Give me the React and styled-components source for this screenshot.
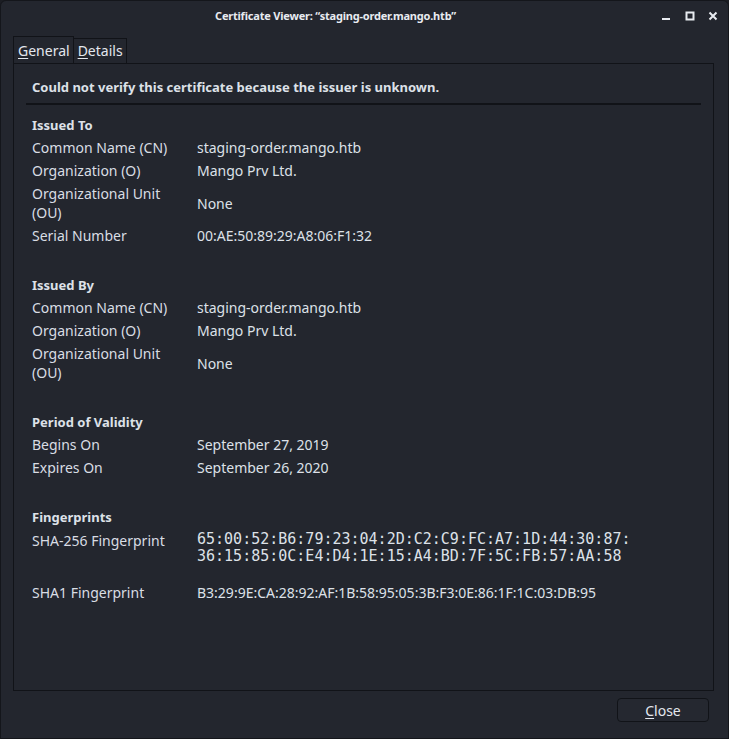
import React from 'react'
import styled, { createGlobalStyle } from 'styled-components'

const Global = createGlobalStyle`
    html, body {
        margin: 0;
        padding: 0;
        background: #1b1d23;
    }
    * { box-sizing: border-box; }
`

const Window = styled.div`
    width: 729px;
    height: 739px;
    background: #23262e;
    border: 1px solid #14161b;
    border-radius: 6px 6px 0 0;
    display: flex;
    flex-direction: column;
    font-family: "Noto Sans", "Open Sans", sans-serif;
    color: #dde1e8;
    overflow: hidden;
`

const TitleBar = styled.div`
    height: 29px;
    display: flex;
    align-items: center;
    padding: 0 10px 0 8px;
`

const Title = styled.div`
    flex: 1;
    text-align: center;
    font-weight: 700;
    font-size: 11px;
    letter-spacing: -0.2px;
    color: #e8ebf0;
`

const Controls = styled.div`
    display: flex;
    align-items: center;
    gap: 13px;
    svg { display: block; }
`

const Body = styled.div`
    flex: 1;
    display: flex;
    flex-direction: column;
    padding: 6px 14px 0 12px;
`

const Tabs = styled.div`
    display: flex;
    align-items: flex-end;
    height: 27px;
`

const Tab = styled.div`
    height: ${p => (p.active ? '27px' : '25px')};
    padding: ${p => (p.active ? '1px' : '0')} 3px 0 4px;
    border: 1px solid #111318;
    border-bottom: none;
    ${p => (p.active ? '' : 'border-left: none;')}
    font-size: 14px;
    line-height: ${p => (p.active ? '26px' : '24px')};
    color: #e3e7ee;
    u { text-decoration-thickness: 1px; text-underline-offset: 2px; }
`

const Panel = styled.div`
    height: 628px;
    border: 1px solid #111318;
    padding: 11px 12px 0 12px;
`

const Warning = styled.div`
    font-weight: 700;
    font-size: 13px;
    line-height: 25px;
    padding-left: 6px;
`

const Separator = styled.div`
    height: 2px;
    background: #111318;
    margin: 3px 0 9px 0;
`

const Section = styled.div`
    padding-left: 6px;
    margin-bottom: ${p => (p.last ? '0' : '27px')};
`

const Heading = styled.div`
    font-weight: 700;
    font-size: 13px;
    line-height: 22px;
`

const Row = styled.div`
    display: grid;
    grid-template-columns: 165px 1fr;
    align-items: center;
    min-height: 23px;
    padding: 2px 0;
    margin-top: ${p => p.gap || 0}px;
    font-size: 14px;
    line-height: 19px;
`

const Label = styled.div`
    color: #d9dde4;
    align-self: ${p => (p.top ? 'start' : 'center')};
    padding-top: ${p => (p.top ? '1px' : '0')};
`

const Value = styled.div`
    color: #dde1e8;
`

const Mono = styled.div`
    font-family: "DejaVu Sans Mono", monospace;
    font-size: 15px;
    line-height: 17px;
    padding-top: 1px;
`

const Footer = styled.div`
    flex: 1;
    display: flex;
    justify-content: flex-end;
    align-items: flex-start;
    padding: 7px 5px 0 0;
`

const Button = styled.div`
    width: 92px;
    height: 24px;
    border: 1px solid #111318;
    border-radius: 4px;
    background: #252830;
    display: flex;
    align-items: center;
    justify-content: center;
    font-size: 14px;
    color: #e3e7ee;
    u { text-decoration-thickness: 1px; text-underline-offset: 2px; }
`

const sections = [
    {
        title: 'Issued To',
        rows: [
            ['Common Name (CN)', 'staging-order.mango.htb'],
            ['Organization (O)', 'Mango Prv Ltd.'],
            ['Organizational Unit (OU)', 'None'],
            ['Serial Number', '00:AE:50:89:29:A8:06:F1:32'],
        ],
    },
    {
        title: 'Issued By',
        rows: [
            ['Common Name (CN)', 'staging-order.mango.htb'],
            ['Organization (O)', 'Mango Prv Ltd.'],
            ['Organizational Unit (OU)', 'None'],
        ],
    },
    {
        title: 'Period of Validity',
        rows: [
            ['Begins On', 'September 27, 2019'],
            ['Expires On', 'September 26, 2020'],
        ],
    },
]

const WindowControls = () => (
    <Controls>
        <svg width="10" height="10" viewBox="0 0 10 10">
            <rect x="0" y="7" width="8" height="2" fill="#e8ebf0" />
        </svg>
        <svg width="10" height="10" viewBox="0 0 10 10">
            <rect x="1.5" y="1.5" width="7" height="7" fill="none" stroke="#e8ebf0" strokeWidth="2" />
        </svg>
        <svg width="10" height="10" viewBox="0 0 10 10">
            <path d="M1.5 1.5 L8.5 8.5 M8.5 1.5 L1.5 8.5" stroke="#e8ebf0" strokeWidth="2" />
        </svg>
    </Controls>
)

const App = () => {
    return (
        <>
            <Global />
            <Window>
                <TitleBar>
                    <Title>Certificate Viewer: “staging-order.mango.htb”</Title>
                    <WindowControls />
                </TitleBar>
                <Body>
                    <Tabs>
                        <Tab active><u>G</u>eneral</Tab>
                        <Tab><u>D</u>etails</Tab>
                    </Tabs>
                    <Panel>
                        <Warning>Could not verify this certificate because the issuer is unknown.</Warning>
                        <Separator />
                        {sections.map(s => (
                            <Section key={s.title}>
                                <Heading>{s.title}</Heading>
                                {s.rows.map(([k, v]) => (
                                    <Row key={k}>
                                        <Label>{k === 'Organizational Unit (OU)' ? <>Organizational Unit<br />(OU)</> : k}</Label>
                                        <Value>{v}</Value>
                                    </Row>
                                ))}
                            </Section>
                        ))}
                        <Section last>
                            <Heading>Fingerprints</Heading>
                            <Row>
                                <Label top>SHA-256 Fingerprint</Label>
                                <Mono>
                                    65:00:52:B6:79:23:04:2D:C2:C9:FC:A7:1D:44:30:87:<br />
                                    36:15:85:0C:E4:D4:1E:15:A4:BD:7F:5C:FB:57:AA:58
                                </Mono>
                            </Row>
                            <Row gap={14}>
                                <Label>SHA1 Fingerprint</Label>
                                <Value>B3:29:9E:CA:28:92:AF:1B:58:95:05:3B:F3:0E:86:1F:1C:03:DB:95</Value>
                            </Row>
                        </Section>
                    </Panel>
                    <Footer>
                        <Button><u>C</u>lose</Button>
                    </Footer>
                </Body>
            </Window>
        </>
    )
}

export default App
